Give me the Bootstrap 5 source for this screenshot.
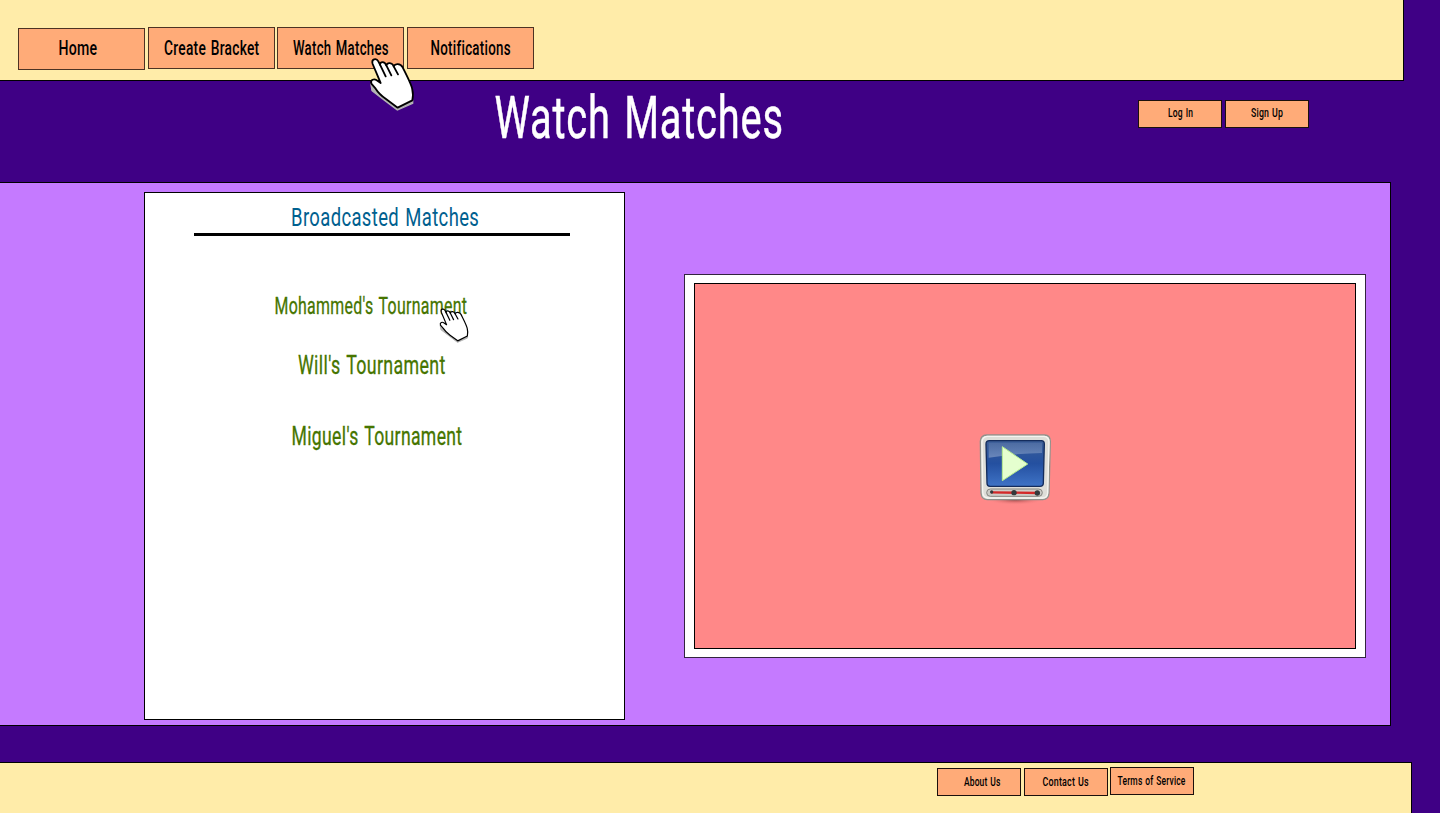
<!DOCTYPE html>
<html lang="en">
<head>
<meta charset="utf-8">
<meta name="viewport" content="width=device-width, initial-scale=1">
<title>Watch Matches</title>
<link href="https://cdn.jsdelivr.net/npm/bootstrap@5.3.0/dist/css/bootstrap.min.css" rel="stylesheet">
<style>
  body { background: #3f0085; font-family: Roboto, "Liberation Sans", sans-serif; color: #000; height: 813px; }
  .topbar { width: 1404px; height: 81px; background: #ffeca9; border: solid #000; border-width: 0 1px 1px 0; padding: 27px 0 0 18px; gap: 2.6px; }
  .tab { width: 127px; height: 42px; border: 1px solid #4d3323; border-radius: 0; background: #ffab78; color: #000; font-size: 19.5px; }
  .topbar .tab { padding: 2px 0 0 1px; }
  .topbar .tab-first { margin-top: 1px; padding: 0 7px 0 0; }
  .tab-sm { width: 84px; height: 28px; font-size: 12.6px; border-color: #1b100c; padding: 0; }
  .account .tab-sm { padding: 0 0 2px 1px; }
  .bottombar .tab-sm { padding-left: 1px; }
  .bottombar .tab-sm:first-child { padding-left: 6px; }
  .bottombar .tab-sm:last-child { padding-left: 0; }
  .tab:hover { background: #ff9c60; }
  .fit { display: inline-block; white-space: nowrap; line-height: 1; flex: none; word-spacing: .07em; letter-spacing: .02em; }
  .tab .fit { font-weight: 500; }
  .hero { height: 101px; }
  .hero h1 { font-size: 59px; font-weight: 400; color: #fff; width: 1278px; height: 73px; -webkit-text-stroke: .5px #fff; }
  .account { left: 1138px; top: 19px; gap: 2.5px; }
  .stage { width: 1391px; height: 544px; background: #c57aff; border: 1px solid #000; border-left: 0; padding: 9px 24px 0 144px; }
  .matches { width: 481px; height: 528px; background: #fff; border: 1px solid #000; padding-top: 10px; }
  .matches h2 { font-size: 26.5px; color: #00608f; height: 30px; margin: 0; padding: 0 0 1px 2px; font-weight: 400; }
  .rule { width: 376px; height: 3px; background: #000; margin: 0 auto 0 49px; }
  .matches a { color: #467500; text-decoration: none; -webkit-text-stroke: .3px #467500; }
  .row-match { height: 30px; font-size: 25.5px; }
  .row-one { font-size: 23.2px; margin: 56px 28px 0 0; }
  .row-two { margin: 29px 25px 0 0; }
  .row-three { margin: 41px 15px 0 0; }
  .player { width: 682px; height: 384px; background: #fff; border: 1px solid #33243f; padding: 8px 9px; margin-top: 82px; }
  .screen { background: #ff8888; border: 1px solid #000; }
  .play-icon { margin: 6px 20px 0 0; }
  .bottombar { width: 1412px; height: 51px; margin-top: 36px; background: #ffeca9; border: solid #000; border-width: 1px 1px 0 0; padding: 5px 0 0 937px; gap: 2.5px; }
  .pointer { pointer-events: none; z-index: 5; }
  .pointer-lg { left: 360px; top: 50px; }
  .pointer-sm { left: 433px; top: 303px; }
</style>
</head>
<body class="overflow-hidden position-relative">

<svg class="d-none">
  <symbol id="hand" viewBox="0 0 192 192">
    <path d="M33 104L36 122 75 152 112 180 158 160V152L110 172 72 143Z" fill="#b5b5b5" stroke="#b5b5b5" stroke-width="4"/>
    <path d="M59 92L38 42C33 27 49 23 55 34L60 44C60 34 74 33 79 46 82 36 97 37 101 49 105 40 121 40 128 52 142 80 157 108 157 120 160 130 159 140 157 151L113 173 78 147C64 137 55 129 47 116L34 101C30 88 43 86 49 90L62 99Z" fill="#fff" stroke="#000" stroke-width="5.5" stroke-linejoin="round"/>
    <path d="M60 44L77 79M79 46L94 76M101 49L114 73" fill="none" stroke="#000" stroke-width="5.5" stroke-linecap="round"/>
  </symbol>
</svg>

<nav class="topbar d-flex align-items-start">
  <a class="tab tab-first btn d-flex align-items-center justify-content-center" href="#"><span class="fit" data-w="39">Home</span></a>
  <a class="tab btn d-flex align-items-center justify-content-center" href="#"><span class="fit" data-w="95">Create Bracket</span></a>
  <a class="tab btn d-flex align-items-center justify-content-center" href="#"><span class="fit" data-w="96">Watch Matches</span></a>
  <a class="tab btn d-flex align-items-center justify-content-center" href="#"><span class="fit" data-w="80">Notifications</span></a>
</nav>

<section class="hero position-relative">
  <h1 class="d-flex align-items-center justify-content-center m-0"><span class="fit" data-w="289">Watch Matches</span></h1>
  <div class="account position-absolute d-flex">
    <a class="tab tab-sm btn d-flex align-items-center justify-content-center mt-0" href="#"><span class="fit" data-w="25">Log In</span></a>
    <a class="tab tab-sm btn d-flex align-items-center justify-content-center" href="#"><span class="fit" data-w="32">Sign Up</span></a>
  </div>
</section>

<main class="stage d-flex justify-content-between align-items-start">
  <section class="matches">
    <h2 class="d-flex align-items-center justify-content-center"><span class="fit" data-w="188">Broadcasted Matches</span></h2>
    <div class="rule"></div>
    <ul class="list-unstyled m-0">
      <li class="row-match row-one d-flex align-items-center justify-content-center"><a class="fit" data-w="193" href="#">Mohammed's Tournament</a></li>
      <li class="row-match row-two d-flex align-items-center justify-content-center"><a class="fit" data-w="148" href="#">Will's Tournament</a></li>
      <li class="row-match row-three d-flex align-items-center justify-content-center"><a class="fit" data-w="171" href="#">Miguel's Tournament</a></li>
    </ul>
  </section>
  <section class="player">
    <div class="screen w-100 h-100 d-flex align-items-center justify-content-center">
      <svg class="play-icon" width="90" height="90" viewBox="0 0 270 270" role="img" aria-label="Play">
        <defs>
          <linearGradient id="tube" x1="0" y1="0" x2="0" y2="1"><stop offset="0" stop-color="#3b5d96"/><stop offset=".5" stop-color="#2450a0"/><stop offset="1" stop-color="#3f73c6"/></linearGradient>
          <linearGradient id="gloss" x1="0" y1="0" x2="0" y2="1"><stop offset="0" stop-color="#fff" stop-opacity=".1"/><stop offset="1" stop-color="#fff" stop-opacity=".3"/></linearGradient>
          <radialGradient id="shade"><stop offset="0" stop-color="#7c2f2f" stop-opacity=".8"/><stop offset="1" stop-color="#ff8888" stop-opacity="0"/></radialGradient>
        </defs>
        <ellipse cx="136" cy="227" rx="88" ry="16" fill="url(#shade)"/>
        <path d="M50 33H224Q241 34 241 52L237 208Q236 227 218 227H52Q34 226 33 207L31 52Q32 34 50 33Z" fill="#deded9" stroke="#91918c" stroke-width="4"/>
        <path d="M52 37H222Q237 38 237 54L233 206Q232 222 217 222H54Q39 221 38 205L36 54Q37 38 52 37Z" fill="none" stroke="#f5f5f1" stroke-width="4"/>
        <path d="M58 50H214Q223 50 223 60L220 178Q220 187 210 187H60Q51 187 51 178L48 60Q48 50 58 50Z" fill="url(#tube)" stroke="#142c5c" stroke-width="4"/>
        <path d="M56 56H216V87Q140 88 56 101Z" fill="url(#gloss)"/>
        <path d="M97 68L173 120 97 170Z" fill="#e5ffcf" stroke="#b8ed8e" stroke-width="3"/>
        <rect x="50" y="195" width="167" height="22" rx="11" fill="#ccccc7" stroke="#868681" stroke-width="3"/>
        <path d="M64 205L205 207" stroke="#d32929" stroke-width="7"/>
        <circle cx="65" cy="204" r="5" fill="#33393b"/><circle cx="132" cy="206" r="8" fill="#33393b"/><circle cx="202" cy="207" r="8" fill="#33393b"/>
      </svg>
    </div>
  </section>
</main>

<footer class="bottombar d-flex align-items-start">
  <a class="tab tab-sm btn d-flex align-items-center justify-content-center" href="#"><span class="fit" data-w="37">About Us</span></a>
  <a class="tab tab-sm btn d-flex align-items-center justify-content-center" href="#"><span class="fit" data-w="46">Contact Us</span></a>
  <a class="tab tab-sm btn d-flex align-items-center justify-content-center" style="margin-top:-1px" href="#"><span class="fit" data-w="68">Terms of Service</span></a>
</footer>

<svg class="pointer pointer-lg position-absolute" width="64" height="64"><use href="#hand"/></svg>
<svg class="pointer pointer-sm position-absolute" width="42" height="42"><use href="#hand"/></svg>

<script src="https://cdn.jsdelivr.net/npm/bootstrap@5.3.0/dist/js/bootstrap.bundle.min.js"></script>
<script>
  // Condense each label to its set width.
  document.querySelectorAll('.fit').forEach(function (el) {
    el.style.transform = 'scaleX(' + (el.dataset.w / el.offsetWidth) + ')';
  });
</script>
</body>
</html>
